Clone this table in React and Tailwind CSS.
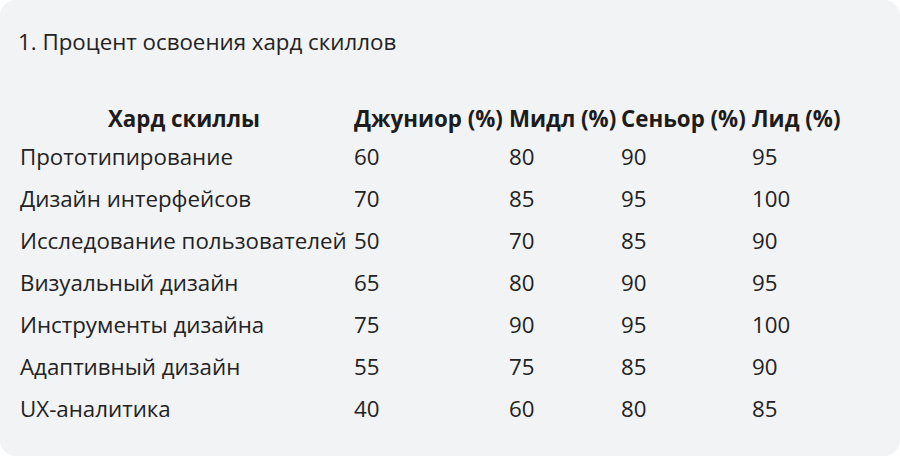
const rows = [
  ["Прототипирование", 60, 80, 90, 95],
  ["Дизайн интерфейсов", 70, 85, 95, 100],
  ["Исследование пользователей", 50, 70, 85, 90],
  ["Визуальный дизайн", 65, 80, 90, 95],
  ["Инструменты дизайна", 75, 90, 95, 100],
  ["Адаптивный дизайн", 55, 75, 85, 90],
  ["UX-аналитика", 40, 60, 80, 85],
];

const cols = "grid grid-cols-[334px_155px_112px_131px_1fr]";

export default function App() {
  return (
    <div className="w-[900px] h-[456px] bg-white font-['Open_Sans',sans-serif] text-[#222]">
      <div className="h-full bg-[#f2f3f5] rounded-2xl pl-[17px] pt-[27px]">
        <p className="text-[22.3px] leading-[30px] pl-[1px]">1. Процент освоения хард скиллов</p>

        <div className="mt-[45px]">
          <div className={`${cols} h-[30px] items-center text-[22.3px] font-bold text-[#1c1c1c]`}>
            <div className="text-center">Хард скиллы</div>
            <div className="pl-[3px]">Джуниор (%)</div>
            <div className="pl-[3px]">Мидл (%)</div>
            <div className="pl-[3px]">Сеньор (%)</div>
            <div className="pl-[3px]">Лид (%)</div>
          </div>
          <div className="mt-[4px]">
            {rows.map((r) => (
              <div key={r[0]} className={`${cols} h-[42px] items-center text-[22.3px]`}>
                <div className="pl-[3px] whitespace-nowrap">{r[0]}</div>
                <div className="pl-[3px]">{r[1]}</div>
                <div className="pl-[3px]">{r[2]}</div>
                <div className="pl-[3px]">{r[3]}</div>
                <div className="pl-[3px]">{r[4]}</div>
              </div>
            ))}
          </div>
        </div>
      </div>
    </div>
  );
}
